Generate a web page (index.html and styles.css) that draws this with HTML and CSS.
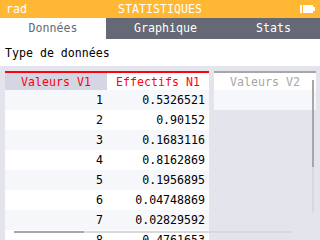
FILE: index.html
```html
<!DOCTYPE html>
<html>
<head>
    <meta charset="UTF-8">
    <title>Statistiques</title>
    <link rel="stylesheet" href="styles.css">
</head>
<body>

<div class="screen">
    <div class="titlebar">
        <span class="angle">rad</span>
        <span class="title">STATISTIQUES</span>
        <svg class="battery" width="15" height="8" viewBox="0 0 15 8">
            <rect x="0" y="0" width="2" height="8" fill="#fff"/>
            <rect x="3" y="0" width="10" height="8" fill="#fff"/>
            <rect x="13" y="2" width="2" height="4" fill="#fff"/>
        </svg>
    </div>

    <div class="tabs">
        <div class="tab active">Données</div>
        <div class="tab tab-graph">Graphique</div>
        <div class="tab tab-stats">Stats</div>
    </div>

    <div class="datatype">Type de données</div>

    <div class="sheet">
        <div class="list">
            <div class="row head">
                <div class="cell selected">Valeurs V1</div>
                <div class="cell">Effectifs N1</div>
            </div>
            <div class="row odd"><div class="cell">1</div><div class="cell">0.5326521</div></div>
            <div class="row"><div class="cell">2</div><div class="cell">0.90152</div></div>
            <div class="row odd"><div class="cell">3</div><div class="cell">0.1683116</div></div>
            <div class="row"><div class="cell">4</div><div class="cell">0.8162869</div></div>
            <div class="row odd"><div class="cell">5</div><div class="cell">0.1956895</div></div>
            <div class="row"><div class="cell">6</div><div class="cell">0.04748869</div></div>
            <div class="row odd"><div class="cell">7</div><div class="cell">0.02829592</div></div>
            <div class="row"><div class="cell">8</div><div class="cell">0.4761653</div></div>
        </div>

        <div class="list list-empty">
            <div class="row head">
                <div class="cell">Valeurs V2</div>
            </div>
            <div class="row odd"><div class="cell">&nbsp;</div></div>
        </div>

        <!-- scroll bars drawn over the table -->
        <div class="vscroll"><div class="thumb"></div></div>
        <div class="hscroll"><div class="thumb"></div></div>
    </div>
</div>

</body>
</html>
```

FILE: styles.css
```css
body {
    margin: 0;
    background: #e4e5ec;
    font-family: "DejaVu Sans Mono", "Liberation Mono", monospace;
    font-size: 11.6px;
}

.screen {
    width: 320px;
    height: 240px;
    overflow: hidden;
    background: #fff;
}

.titlebar {
    height: 18px;
    background: #ffb734;
    color: #fff;
    display: flex;
    align-items: center;
    padding: 0 5px 0 6px;
    position: relative;
}
.titlebar .title {
    position: absolute;
    left: 0;
    right: 0;
    text-align: center;
}
.battery {
    margin-left: auto;
}

.tabs {
    display: flex;
    height: 21px;
    background: #656975;
    color: #fff;
}
.tab {
    width: 107px;
    line-height: 21px;
    text-align: center;
}
.tab.active {
    width: 106px;
    background: #fff;
    color: #656975;
}
.tab-graph {
    padding-left: 12px;
    box-sizing: border-box;
}
.tab-stats {
    padding-left: 14px;
    box-sizing: border-box;
}

.datatype {
    height: 25px;
    line-height: 25px;
    padding: 2px 0 0 5px;
    color: #000;
}

.sheet {
    position: relative;
    height: 169px;
    padding: 5px 0 0 5px;
    background: #e4e5ec;
    display: flex;
    gap: 5px;
    overflow: hidden;
}

.list {
    width: 204px;
    border-top: 2px solid #ff000c;
    align-self: flex-start;
}
.list-empty {
    width: 102px;
    flex-shrink: 0;
    border-top-color: #a7a7a7;
}

.row {
    display: flex;
    height: 20px;
    background: #fff;
}
.row.odd {
    background: #f5f7fb;
}
.cell {
    width: 102px;
    box-sizing: border-box;
    padding-right: 4px;
    line-height: 20px;
    text-align: right;
    color: #000;
}

.row.head {
    height: 17px;
    background: #fff;
}
.head .cell {
    line-height: 18px;
    padding-right: 0;
    text-align: center;
    color: #ff000c;
}
.head .cell.selected {
    background: #d4d7e3;
}
.list-empty .head .cell {
    color: #a7a7a7;
}

.vscroll {
    position: absolute;
    left: 312px;
    top: 14px;
    width: 2px;
    height: 132px;
    background: #d9d9d9;
}
.vscroll .thumb {
    height: 87px;
    background: #a7a7a7;
}

.hscroll {
    position: absolute;
    left: 14px;
    top: 165px;
    width: 278px;
    height: 2px;
    background: #d9d9d9;
}
.hscroll .thumb {
    width: 70px;
    height: 2px;
    background: #a7a7a7;
}
```
